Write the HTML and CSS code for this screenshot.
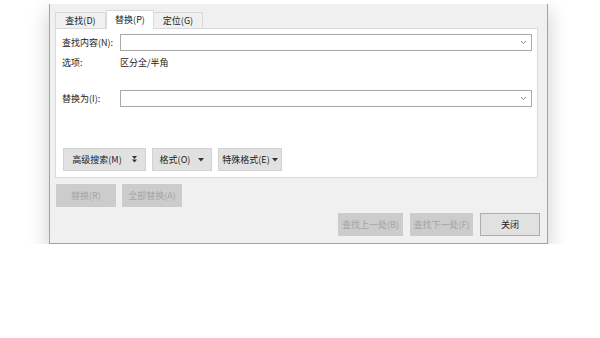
FILE: index.html
```html
<!DOCTYPE html>
<html lang="zh-CN">
<head>
    <meta charset="UTF-8">
    <title>查找和替换</title>
    <link rel="stylesheet" href="styles.css">
</head>
<body>
    <!-- 查找和替换对话框 -->
    <div class="dialog">
        <div class="titlebar"></div>

        <div class="tabs">
            <div class="tab">查找(D)</div>
            <div class="tab active">替换(P)</div>
            <div class="tab">定位(G)</div>
        </div>

        <div class="panel">
            <div class="row">
                <span class="label">查找内容(N):</span>
                <div class="combo">
                    <svg class="chev" width="7" height="5" viewBox="0 0 7 5"><path d="M1 1l2.5 2.5L6 1" fill="none" stroke="#8a8a8a" stroke-width="1"/></svg>
                </div>
            </div>
            <div class="row options">
                <span class="label">选项:</span>
                <span>区分全/半角</span>
            </div>
            <div class="row replace">
                <span class="label">替换为(I):</span>
                <div class="combo">
                    <svg class="chev" width="7" height="5" viewBox="0 0 7 5"><path d="M1 1l2.5 2.5L6 1" fill="none" stroke="#8a8a8a" stroke-width="1"/></svg>
                </div>
            </div>

            <div class="tools">
                <button class="btn wide">高级搜索(M)
                    <svg width="5" height="7" viewBox="0 0 5 7"><path d="M0 0h5L2.5 3z M0 3.5h5L2.5 6.5z" fill="#333"/></svg>
                </button>
                <button class="btn">格式(O)
                    <svg width="6" height="4" viewBox="0 0 6 4"><path d="M0 0h6L3 3.5z" fill="#333"/></svg>
                </button>
                <button class="btn tight">特殊格式(E)
                    <svg width="6" height="4" viewBox="0 0 6 4"><path d="M0 0h6L3 3.5z" fill="#333"/></svg>
                </button>
            </div>
        </div>

        <div class="actions">
            <button class="btn off">替换(R)</button>
            <button class="btn off">全部替换(A)</button>
        </div>

        <div class="footer">
            <button class="btn off w65">查找上一处(B)</button>
            <button class="btn off w63">查找下一处(F)</button>
            <button class="btn close">关闭</button>
        </div>
    </div>
</body>
</html>
```

FILE: styles.css
```css
body {
    margin: 0;
    background-color: #fff;
    font-family: "Noto Sans CJK SC", "Liberation Sans", sans-serif;
    font-size: 9px;
    color: #222;
}

.dialog {
    margin-left: 49px;
    width: 499px;
    box-sizing: border-box;
    background-color: #f0f0f0;
    border: 1px solid #a3a3a3;
    border-top: none;
    box-shadow: 0 10px 20px rgba(0, 0, 0, 0.2);
    padding-bottom: 7px;
}

.titlebar {
    height: 4px;
    background-color: #fff;
    margin: 0 -1px;
}

.tabs {
    display: flex;
    align-items: flex-end;
    height: 24px;
    padding-left: 5px;
}

.tab {
    height: 16px;
    line-height: 16px;
    box-sizing: border-box;
    border: 1px solid #dadada;
    border-bottom: none;
    background-color: #f0f0f0;
    text-align: center;
    width: 51px;
}

.tab + .tab {
    border-left: none;
}

.tab.active {
    width: 48px;
    height: 19px;
    margin-bottom: -1px;
    line-height: 17px;
    background-color: #fff;
    border-left: 1px solid #dadada;
    position: relative;
}

.tab.active + .tab {
    width: 49px;
}

.panel {
    margin-left: 5px;
    width: 483px;
    height: 150px;
    box-sizing: border-box;
    background-color: #fff;
    border: 1px solid #dadada;
    padding: 5px 5px 6px 6px;
    display: flex;
    flex-direction: column;
}

.row {
    display: flex;
    align-items: center;
    height: 17px;
}

.label {
    width: 58px;
    flex-shrink: 0;
}

.combo {
    width: 413px;
    height: 17px;
    box-sizing: border-box;
    border: 1px solid #a9a9a9;
    display: flex;
    align-items: center;
    justify-content: flex-end;
    padding-right: 4px;
}

.options {
    margin-top: 3px;
    height: 17px;
}

.replace {
    margin-top: 19px;
}

.tools {
    display: flex;
    gap: 6px;
    margin-top: auto;
    padding-left: 1px;
}

.btn {
    height: 23px;
    box-sizing: border-box;
    background-color: #e1e1e1;
    border: 1px solid #d2d2d2;
    font-family: inherit;
    font-size: 9px;
    color: #222;
    padding: 0;
    display: flex;
    align-items: center;
    justify-content: center;
    gap: 8px;
}

.tools .btn {
    width: 60px;
}

.tools .btn.wide {
    width: 83px;
    gap: 10px;
}

.tools .btn.tight {
    width: 64px;
    gap: 2px;
}

.actions {
    display: flex;
    gap: 6px;
    padding: 6px 0 0 6px;
}

.btn.off {
    width: 60px;
    background-color: #cccccc;
    border-color: #cccccc;
    color: #a4a4a4;
}

.footer {
    display: flex;
    justify-content: flex-end;
    gap: 7px;
    padding: 6px 7px 0 0;
}

.btn.w65 {
    width: 65px;
}

.btn.w63 {
    width: 63px;
}

.btn.close {
    width: 60px;
    border-color: #adadad;
}
```
